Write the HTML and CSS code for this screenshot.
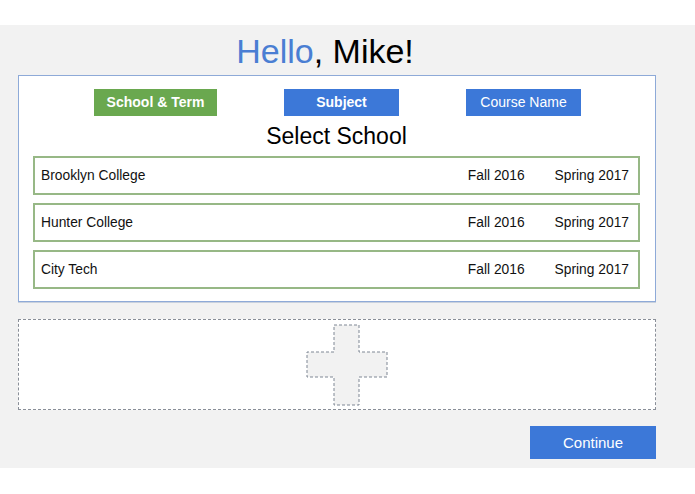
FILE: index.html
```html
<!DOCTYPE html>
<html>
<head>
<meta charset="utf-8">
<link rel="stylesheet" href="styles.css">
</head>
<body>
<div class="top"></div>
<main class="stage">
  <h1 class="greeting"><span class="hello">Hello</span>, Mike!</h1>
  <section class="card">
    <nav class="tabs">
      <div class="tab tab-green">School &amp; Term</div>
      <div class="tab tab-blue tab-bold">Subject</div>
      <div class="tab tab-blue">Course Name</div>
    </nav>
    <h2 class="card-title">Select School</h2>
    <div class="rows">
      <div class="row"><span class="school">Brooklyn College</span><span class="term">Fall 2016</span><span class="term">Spring 2017</span></div>
      <div class="row"><span class="school">Hunter College</span><span class="term">Fall 2016</span><span class="term">Spring 2017</span></div>
      <div class="row"><span class="school">City Tech</span><span class="term">Fall 2016</span><span class="term">Spring 2017</span></div>
    </div>
  </section>
  <div class="dropzone">
    <svg class="plus" width="82" height="82" viewBox="0 0 82 82">
      <polygon points="28,1 53,1 53,28 81,28 81,53 53,53 53,81 28,81 28,53 1,53 1,28 28,28" fill="#f2f2f2" stroke="#7f8794" stroke-width="1" stroke-dasharray="3,2"/>
    </svg>
  </div>
  <div class="actions">
    <button class="continue">Continue</button>
  </div>
</main>
</body>
</html>
```
FILE: styles.css
```css
html, body {
  margin: 0;
  padding: 0;
  background: #ffffff;
  font-family: "Liberation Sans", Arial, sans-serif;
  color: #111;
}
.top {
  height: 25px;
}
.stage {
  background: #f2f2f2;
  height: 443px;
  box-sizing: border-box;
  padding: 0 39px 0 18px;
}
.greeting {
  margin: 0;
  padding: 3px 24px 0 0;
  height: 50px;
  box-sizing: border-box;
  line-height: 47px;
  font-size: 34px;
  font-weight: normal;
  text-align: center;
  color: #000;
}
.hello {
  color: #4a7ed3;
}
.card {
  background: #fff;
  border: 1px solid #8eaad8;
  box-shadow: 0 1px 0 #c9d1dd;
  padding: 13px 15px 12px 14px;
}
.tabs {
  display: flex;
  justify-content: center;
  gap: 67px;
  padding-left: 2px;
}
.tab {
  height: 27px;
  line-height: 27px;
  text-align: center;
  color: #fff;
  font-size: 14px;
}
.tab-green {
  background: #6aa84f;
  width: 123px;
  font-weight: bold;
}
.tab-blue {
  background: #3c78d8;
  width: 115px;
}
.tab-bold {
  font-weight: bold;
}
.card-title {
  margin: 0;
  height: 40px;
  line-height: 40px;
  font-size: 23px;
  font-weight: normal;
  text-align: center;
  color: #000;
}
.rows {
  display: flex;
  flex-direction: column;
  gap: 8px;
}
.row {
  height: 39px;
  box-sizing: border-box;
  border: 2px solid #97b886;
  display: flex;
  align-items: center;
  padding: 0 9px 0 6px;
  font-size: 13.8px;
  color: #111;
}
.school {
  flex: 1;
}
.term + .term {
  margin-left: 30px;
}
.dropzone {
  margin-top: 17px;
  height: 91px;
  box-sizing: border-box;
  border: 1px dashed #8a8f98;
  background: #fff;
  display: flex;
  align-items: center;
  justify-content: center;
}
.plus {
  display: block;
  margin-left: 20px;
}
.actions {
  display: flex;
  justify-content: flex-end;
  margin-top: 16px;
}
.continue {
  width: 126px;
  height: 33px;
  border: none;
  background: #3c78d8;
  color: #fff;
  font-family: "Liberation Sans", Arial, sans-serif;
  font-size: 15px;
  padding: 0;
}
```
